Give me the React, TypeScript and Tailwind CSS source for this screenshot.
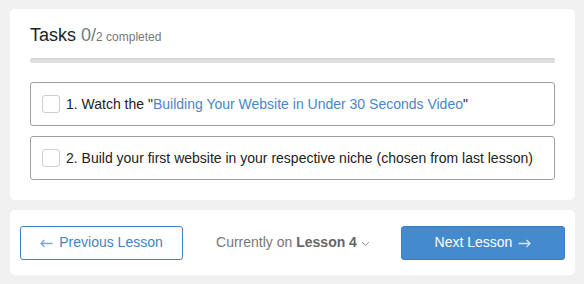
import React from 'react';

function App() {
    return (
        <div className="min-h-[284px] w-full bg-[#f1f1f1] pl-[10px] pr-[9px] pt-[9px] pb-[9px] text-[14px] font-['Liberation_Sans',Arial,sans-serif]">
            <div className="rounded-[5px] bg-white px-5 pt-[14px] pb-[20px]">
                <h2 className="flex items-baseline text-[18px] leading-[24px] text-[#222]">
                    Tasks<span className="ml-[5px] text-[#6e7a88]">0/</span>
                    <span className="text-[12px] text-[#777]">2 completed</span>
                </h2>
                <div className="mt-[9px] h-[5px] w-full rounded-[3px] bg-[#dedede] shadow-[inset_0_1px_1px_rgba(0,0,0,0.06)]"></div>
                <div className="mt-[19px] flex flex-col gap-[10px]">
                    <div className="flex h-[44px] items-center rounded-[3px] border border-[#a0a0a0] px-[11px]">
                        <span className="h-[18px] w-[18px] rounded-[3px] border border-[#cfcfcf] bg-white"></span>
                        <span className="ml-[6px] text-[#222]">1. Watch the "<a className="text-[#4a86c8]">Building Your Website in Under 30 Seconds Video</a>"</span>
                    </div>
                    <div className="flex h-[44px] items-center rounded-[3px] border border-[#a0a0a0] px-[11px]">
                        <span className="h-[18px] w-[18px] rounded-[3px] border border-[#cfcfcf] bg-white"></span>
                        <span className="ml-[6px] text-[#222]">2. Build your first website in your respective niche (chosen from last lesson)</span>
                    </div>
                </div>
            </div>
            <div className="mt-[10px] flex h-[65px] items-center justify-between rounded-[5px] bg-white px-[10px]">
                <button className="flex h-[34px] w-[163px] items-center justify-center rounded-[3px] border border-[#3f83c6] text-[#3f83c6]">
                    <svg className="mr-[6px] mt-[1px]" width="13" height="9" viewBox="0 0 13 9" fill="none">
                        <path d="M12.5 4.5H1.2M4.5 1L1 4.5L4.5 8" stroke="#7aa7d6" strokeWidth="1.3" />
                    </svg>
                    Previous Lesson
                </button>
                <div className="ml-[2px] flex items-center text-[#777]">
                    Currently on&nbsp;<b className="font-bold text-[#666]">Lesson 4</b>
                    <svg className="ml-[4px] mt-[2px]" width="9" height="6" viewBox="0 0 9 6" fill="none">
                        <path d="M1 1l3.5 3.5L8 1" stroke="#999" strokeWidth="1" />
                    </svg>
                </div>
                <button className="flex h-[34px] w-[164px] items-center justify-center rounded-[3px] border border-[#3a7fc2] bg-[#438ace] text-white">
                    Next Lesson
                    <svg className="ml-[6px] mt-[1px]" width="13" height="9" viewBox="0 0 13 9" fill="none">
                        <path d="M0.5 4.5H11.8M8.5 1L12 4.5L8.5 8" stroke="#d6e5f4" strokeWidth="1.3" />
                    </svg>
                </button>
            </div>
        </div>
    );
}

export default App;
